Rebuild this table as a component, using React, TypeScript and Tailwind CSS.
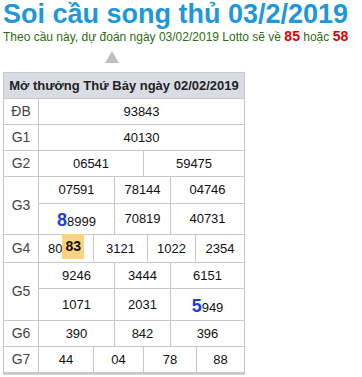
import React from 'react';

const border = 'border-[#c8c8c8]';

const Cell: React.FC<{ children: React.ReactNode; last?: boolean }> = ({ children, last }) => (
  <div className={`flex items-center justify-center ${last ? '' : `border-r ${border}`}`}>{children}</div>
);

const Big: React.FC<{ d: string }> = ({ d }) => (
  <span className="text-[18px] font-bold text-[#1b3fd6]">{d}</span>
);

const Row: React.FC<{ label: string; h: string; children: React.ReactNode }> = ({ label, h, children }) => (
  <div className={`flex border-b ${border} ${h}`}>
    <div className={`w-[35px] shrink-0 flex items-center justify-center border-r ${border} text-[14px] text-[#444]`}>
      {label}
    </div>
    <div className="flex-1 flex flex-col">{children}</div>
  </div>
);

export default function App() {
  return (
    <div className="bg-white w-[362px] h-[377px] font-['Liberation_Sans',Arial,sans-serif] text-[#111]">
      <h1 className="pl-[3px] text-[27px] leading-[29px] font-bold text-[#1e98da] whitespace-nowrap">
        Soi cầu song thủ 03/2/2019
      </h1>
      <p className="pl-[3px] text-[12px] leading-[15px] text-[#2f6b12] whitespace-nowrap">
        Theo cầu này, dự đoán ngày 03/02/2019 Lotto sẽ về{' '}
        <b className="text-[14px] text-[#e00000]">85</b> hoặc{' '}
        <b className="text-[14px] text-[#e00000]">58</b>
      </p>
      <div className="h-[27px] flex items-end pl-[105px] pb-[9px]">
        <div className="w-0 h-0 border-l-[7px] border-r-[7px] border-b-[12px] border-l-transparent border-r-transparent border-b-[#bdbdbd]" />
      </div>

      <div className={`ml-[3px] w-[242px] border ${border} text-[13px] shadow-[0_1px_0_#d4d4d4]`}>
        <div className={`h-[26px] flex items-center justify-center bg-[#d9dce3] border-b ${border} font-bold text-[13px] text-[#222]`}>
          Mở thưởng Thứ Bảy ngày 02/02/2019
        </div>

        <Row label="ĐB" h="h-[26px]">
          <div className="flex-1 flex items-center justify-center">93843</div>
        </Row>
        <Row label="G1" h="h-[26px]">
          <div className="flex-1 flex items-center justify-center">40130</div>
        </Row>
        <Row label="G2" h="h-[26px]">
          <div className="flex-1 grid grid-cols-[105px_1fr]">
            <Cell>06541</Cell>
            <Cell last>59475</Cell>
          </div>
        </Row>
        <Row label="G3" h="h-[58px]">
          <div className={`h-[27px] grid grid-cols-[76px_56px_1fr] border-b ${border}`}>
            <Cell>07591</Cell>
            <Cell>78144</Cell>
            <Cell last>04746</Cell>
          </div>
          <div className="flex-1 grid grid-cols-[76px_56px_1fr]">
            <Cell>
              <span className="pt-[3px]">
                <Big d="8" />8999
              </span>
            </Cell>
            <Cell>70819</Cell>
            <Cell last>40731</Cell>
          </div>
        </Row>
        <Row label="G4" h="h-[28px]">
          <div className="flex-1 grid grid-cols-[55px_54px_48px_1fr]">
            <Cell>
              <span className="flex items-start h-full">
                <span className="self-center">80</span>
                <span className="mt-[-1px] h-[25px] leading-[25px] px-[3px] bg-[#fbd37f] font-bold text-[14px] text-[#111]">83</span>
              </span>
            </Cell>
            <Cell>3121</Cell>
            <Cell>1022</Cell>
            <Cell last>2354</Cell>
          </div>
        </Row>
        <Row label="G5" h="h-[58px]">
          <div className={`h-[26px] grid grid-cols-[76px_56px_1fr] border-b ${border}`}>
            <Cell>9246</Cell>
            <Cell>3444</Cell>
            <Cell last>6151</Cell>
          </div>
          <div className="flex-1 grid grid-cols-[76px_56px_1fr]">
            <Cell>1071</Cell>
            <Cell>2031</Cell>
            <Cell last>
              <span className="pt-[3px]">
                <Big d="5" />949
              </span>
            </Cell>
          </div>
        </Row>
        <Row label="G6" h="h-[26px]">
          <div className="flex-1 grid grid-cols-[76px_56px_1fr]">
            <Cell>390</Cell>
            <Cell>842</Cell>
            <Cell last>396</Cell>
          </div>
        </Row>
        <Row label="G7" h="h-[26px]">
          <div className="flex-1 grid grid-cols-[55px_50px_53px_1fr]">
            <Cell>44</Cell>
            <Cell>04</Cell>
            <Cell>78</Cell>
            <Cell last>88</Cell>
          </div>
        </Row>
      </div>
    </div>
  );
}
